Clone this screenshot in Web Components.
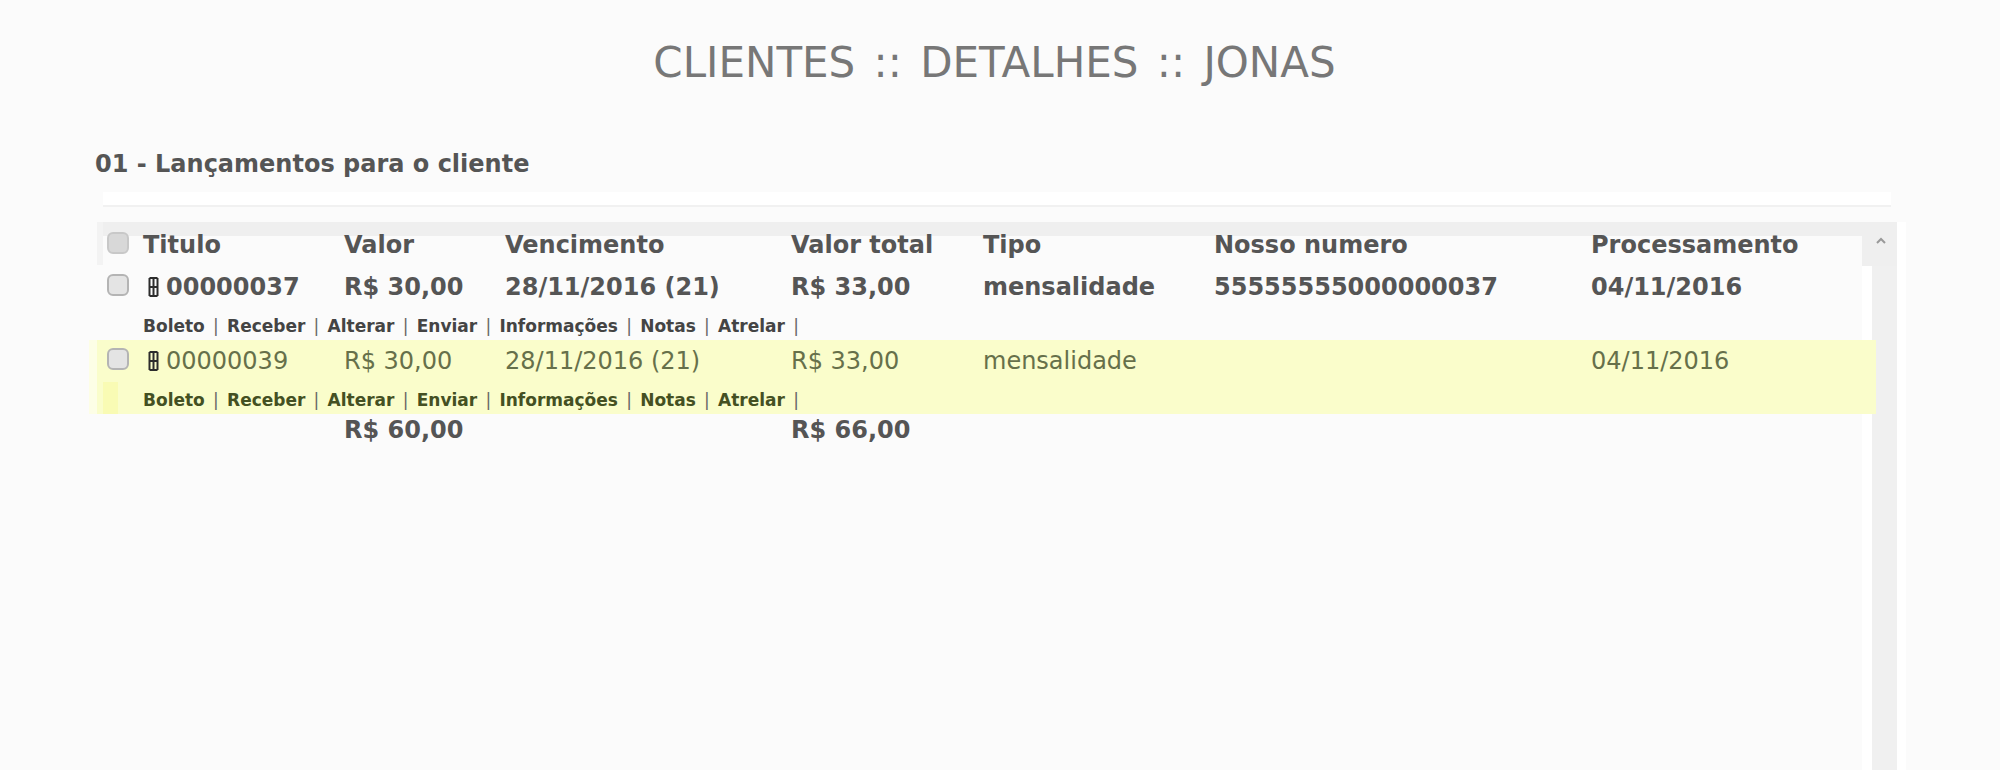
<!DOCTYPE html>
<html lang="pt"><head><meta charset="utf-8"><title>Clientes</title>
<style>
html,body{margin:0;height:770px;overflow:hidden;background:#fbfbfb;font-family:"DejaVu Sans",sans-serif;color:#555}
</style></head><body>
<app-page>
  <page-title>CLIENTES :: DETALHES :: JONAS</page-title>
  <section-head>01 - Lançamentos para o cliente</section-head>
  <data-panel>
    <data-row kind="head" cells="Titulo|Valor|Vencimento|Valor total|Tipo|Nosso numero|Processamento"></data-row>
    <data-row kind="strong" mark cells="00000037|R$ 30,00|28/11/2016 (21)|R$ 33,00|mensalidade|55555555000000037|04/11/2016"></data-row>
    <action-row></action-row>
    <data-row kind="warn" mark cells="00000039|R$ 30,00|28/11/2016 (21)|R$ 33,00|mensalidade||04/11/2016"></data-row>
    <action-row warn></action-row>
    <data-row kind="total" cells="|R$ 60,00||R$ 66,00|||"></data-row>
  </data-panel>
</app-page>
<script>
const COLS='46px 201px 161px 286px 192px 231px 377px 1fr';
class AppPage extends HTMLElement{constructor(){super();this.attachShadow({mode:'open'}).innerHTML=`<style>:host{display:block;height:770px;padding-top:39px;box-sizing:border-box}</style><slot></slot>`}}
class PageTitle extends HTMLElement{constructor(){super();this.attachShadow({mode:'open'}).innerHTML=`<style>:host{display:block;text-align:center;font-size:42px;word-spacing:5px;line-height:48px;font-weight:400;color:#777;padding-right:11px;}</style><slot></slot>`}}
class SectionHead extends HTMLElement{constructor(){super();this.attachShadow({mode:'open'}).innerHTML=`<style>:host{display:block;margin:65px 0 0 95px;font-size:24px;line-height:24px;font-weight:700;color:#555}
.rule{height:13px;margin:16px 0 0 8px;width:1788px;background:#fff;border-bottom:2px solid #f1f1f1}</style><slot></slot><div class="rule"></div>`}}
class DataPanel extends HTMLElement{constructor(){super();this.attachShadow({mode:'open'}).innerHTML=`<style>
:host{display:block;position:relative;margin:15px 0 0 97px;width:1809px;height:548px;box-sizing:border-box}
.top{position:absolute;left:0;top:0;width:1800px;height:14px;background:#efefef}
.left{position:absolute;left:0;top:0;width:6px;height:43px;background:#f3f3f3}
.track{position:absolute;left:1765px;top:0;width:44px;bottom:0;background:#f0f0f0;border-left:10px solid #fff;border-right:9px solid #fff;box-sizing:border-box}
.trackTop{position:absolute;left:1765px;top:0;width:35px;height:44px;background:#efefef}
svg{position:absolute;left:1777px;top:14px}
.rows{position:relative;padding-top:2px}
</style><div class="track"></div><div class="top"></div><div class="left"></div><div class="trackTop"></div>
<svg width="14" height="10" viewBox="0 0 14 10"><path d="M3 7 7 3l4 4" fill="none" stroke="#999" stroke-width="2"/></svg>
<div class="rows"><slot></slot></div>`}}
const check=(l)=>`<svg width="24" height="24" viewBox="0 0 24 24"><rect x="2" y="2" width="20" height="20" rx="5" fill="${l?'#d8d8d8':'#e4e4e4'}" stroke="${l?'#c8c8c8':'#b4b4b4'}" stroke-width="2"/></svg>`;
const glyph=`<svg width="11" height="24" viewBox="0 0 11 24" style="margin:0 7px 0 5px;flex:none"><path d="M1.500 3v18M5.500 3v18M9.500 3v18M1.500 3h8M1.500 12h8M1.500 21h8" fill="none" stroke="#2c2c2c" stroke-width="2"/></svg>`;
class DataRow extends HTMLElement{connectedCallback(){
 const kind=this.getAttribute('kind'),cells=this.getAttribute('cells').split('|');
 const root=this.shadowRoot||this.attachShadow({mode:'open'});
 const h={head:42,strong:42,warn:42,total:32}[kind];
 const st=`<style>
 :host{display:grid;grid-template-columns:${COLS};height:${h}px;align-items:center;font-size:24px;line-height:28px;
   font-weight:${kind==='warn'?400:700};color:${kind==='warn'?'#66704a':'#555'};background:${kind==='warn'?'#fafdcb':'transparent'};
   ${kind==='warn'?'margin-right:30px;box-shadow:-8px 0 0 #fdfee6':''}}
 .c{display:flex;align-items:center;white-space:pre}
 .chk{display:flex;padding:0 0 4px 9px}
 </style>`;
 let html=`<div class="chk">${kind!=='total'?check(kind==='head'):''}</div>`;
 cells.forEach((t,i)=>{
   const pre=(i===0&&this.hasAttribute('mark'))?glyph:'';
   html+=`<div class="c">${pre}<span>${t}</span></div>`;
 });
 root.innerHTML=st+html;
}}
class ActionRow extends HTMLElement{constructor(){super();
 const links=['Boleto','Receber','Alterar','Enviar','Informações','Notas','Atrelar'];
 this.attachShadow({mode:'open'}).innerHTML=`<style>
 :host{display:flex;box-sizing:border-box;height:32px;padding-top:4px;align-items:center;padding-left:46px;font-size:17px;line-height:20px;font-weight:700;color:#444;margin-right:30px}
 :host([warn]){background:linear-gradient(90deg,#fafdcb 6px,#f9fbb4 6px,#f9fbb4 21px,#fafdcb 21px);color:#445022;box-shadow:-8px 0 0 #fdfee6}
 a{color:inherit;text-decoration:none}
 i{font-style:normal;font-weight:400;color:#666;margin:0 8.250px}
 </style>`+links.map(l=>`<a>${l}</a><i>|</i>`).join('');
}}
customElements.define('app-page',AppPage);
customElements.define('page-title',PageTitle);
customElements.define('section-head',SectionHead);
customElements.define('data-panel',DataPanel);
customElements.define('data-row',DataRow);
customElements.define('action-row',ActionRow);
</script>
</body></html>
